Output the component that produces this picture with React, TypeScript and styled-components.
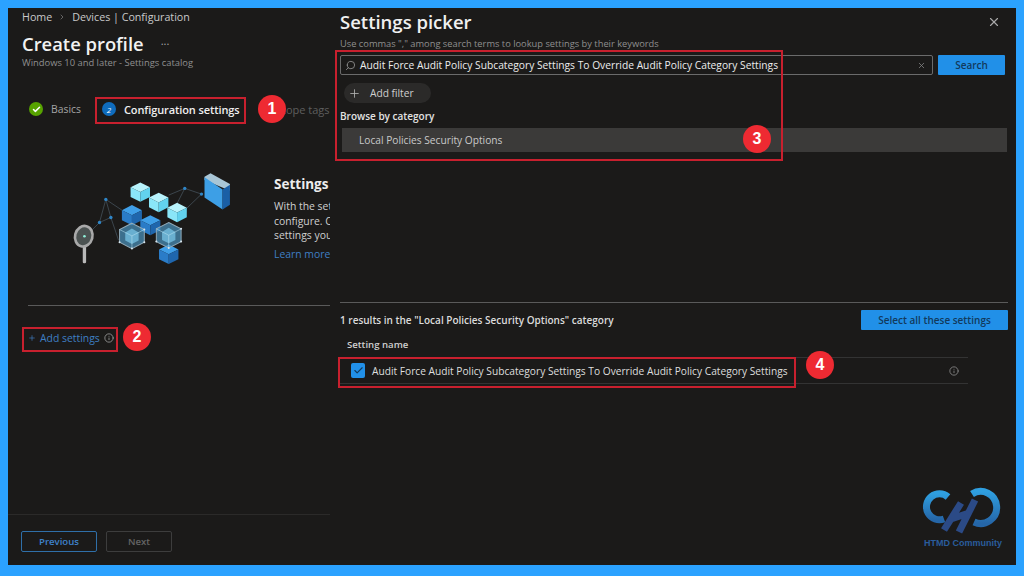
import React from 'react'
import styled, { createGlobalStyle } from 'styled-components'
import { X, Search as SearchIcon, Plus, Check, ChevronRight, Info } from 'lucide-react'

const GlobalStyle = createGlobalStyle`
  html, body {
    margin: 0;
    padding: 0;
    background: #2ba2ff;
  }
  body {
    font-family: "Open Sans", "Noto Sans", sans-serif;
  }
`

const Frame = styled.div`
  position: relative;
  width: 1024px;
  height: 576px;
  box-sizing: border-box;
  padding: 8px 8px 11px 8px;
  background: #2ba2ff;
  overflow: hidden;
`

const Layout = styled.div`
  display: grid;
  grid-template-columns: 322px 1fr;
  height: 100%;
  background: #1b1a19;
  color: #e6e6e6;
`

/* left blade */
const Blade = styled.section`
  display: flex;
  flex-direction: column;
  min-width: 0;
  overflow: hidden;
`

const Crumbs = styled.nav`
  display: flex;
  align-items: center;
  gap: 6px;
  padding: 1px 0 0 14px;
  height: 15px;
  font-size: 10.7px;
  color: #c9c9c9;
`

const Title = styled.h1`
  margin: 4px 0 0 14px;
  font-size: 18.4px;
  line-height: 26px;
  font-weight: 600;
  color: #f2f2f2;
  display: flex;
  align-items: center;
  gap: 17px;
`

const Ellipsis = styled.span`
  font-size: 11px;
  font-weight: 400;
  color: #a8a8a8;
  margin-bottom: 6px;
`

const Caption = styled.p`
  margin: -3px 0 0 14px;
  font-size: 9.4px;
  line-height: 12px;
  color: #8f8f8f;
`

const Steps = styled.div`
  display: flex;
  align-items: center;
  height: 20px;
  margin-top: 30px;
  padding-left: 21px;
  white-space: nowrap;
`

const StepDot = styled.span<{ $color: string; $gap?: number }>`
  width: 14px;
  height: 14px;
  flex: none;
  margin-left: ${(p) => p.$gap ?? 0}px;
  border-radius: 50%;
  background: ${(p) => p.$color};
  color: #fff;
  display: flex;
  align-items: center;
  justify-content: center;
  font-size: 8px;
  font-style: italic;
`

const StepLabel = styled.span<{ $active?: boolean; $dim?: boolean }>`
  margin-left: ${(p) => (p.$dim ? '35px' : '8px')};
  font-size: ${(p) => (p.$active || p.$dim ? '11px' : '10.4px')};
  font-weight: ${(p) => (p.$active ? 600 : 400)};
  letter-spacing: ${(p) => (p.$active ? '-0.1px' : '0')};
  color: ${(p) => (p.$active ? '#efefef' : p.$dim ? '#5e5e5e' : '#a4a4a4')};
`

const Intro = styled.div`
  display: flex;
  height: 135px;
  margin-top: 51px;
  white-space: nowrap;
`

const IntroArt = styled.svg`
  width: 164px;
  height: 97px;
  margin: 0 40px 0 62px;
  flex: none;
`

const IntroText = styled.div`
  padding-top: 5px;
  min-width: 0;
`

const IntroHeading = styled.h2`
  margin: 0 0 6px 0;
  font-size: 13.5px;
  line-height: 18px;
  font-weight: 700;
  color: #ededed;
`

const IntroLine = styled.p`
  margin: 0;
  font-size: 10.4px;
  line-height: 14.5px;
  color: #cfcfcf;
`

const LearnLink = styled.a`
  display: block;
  margin-top: 4px;
  font-size: 10.4px;
  line-height: 14px;
  color: #3f7fc4;
`

const Rule = styled.hr`
  height: 1px;
  margin: 0 0 0 20px;
  border: 0;
  background: #5a5a5a;
`

const AddRow = styled.div`
  display: flex;
  align-items: center;
  gap: 4px;
  height: 20px;
  margin: 22px 0 0 20px;
  font-size: 10.4px;
  color: #3f7fc4;
`

const Spacer = styled.div`
  flex: 1;
`

const FooterRule = styled.hr`
  height: 1px;
  margin: 0;
  border: 0;
  background: #2b2a29;
`

const Footer = styled.div`
  display: flex;
  gap: 9px;
  padding: 16px 0 13px 13px;
`

const FooterButton = styled.button<{ $primary?: boolean }>`
  height: 21px;
  width: ${(p) => (p.$primary ? 76 : 66)}px;
  padding: 0;
  border-radius: 2px;
  background: transparent;
  border: 1px solid ${(p) => (p.$primary ? '#2f6fa8' : '#3d3d3d')};
  color: ${(p) => (p.$primary ? '#3f82cc' : '#646464')};
  font-family: inherit;
  font-size: 9.6px;
  font-weight: 600;
`

/* right picker */
const Picker = styled.section`
  display: flex;
  flex-direction: column;
  padding: 0 8px 0 10px;
  min-width: 0;
`

const PickerHead = styled.div`
  display: flex;
  align-items: center;
  justify-content: space-between;
  height: 28px;
  padding-right: 7px;
`

const PickerTitle = styled.h2`
  margin: 0;
  font-size: 18.5px;
  font-weight: 600;
  line-height: 28px;
  color: #f0f0f0;
`

const PickerHint = styled.p`
  margin: 1px 0 0 0;
  font-size: 9.3px;
  line-height: 13px;
  color: #8f8f8f;
`

const SearchRow = styled.div`
  display: flex;
  gap: 5px;
  margin-top: 5px;
  padding-right: 3px;
`

const SearchBox = styled.div`
  flex: 1;
  display: flex;
  align-items: center;
  gap: 4px;
  height: 20px;
  box-sizing: border-box;
  padding: 0 6px 0 4px;
  border: 1px solid #6b6b6b;
  border-radius: 2px;
  font-size: 10.25px;
  color: #ededed;
  white-space: nowrap;
`

const SearchValue = styled.span`
  flex: 1;
`

const FlippedSearch = styled(SearchIcon)`
  flex: none;
  transform: scaleX(-1);
`

const PrimaryButton = styled.button<{ $wide?: boolean }>`
  width: ${(p) => (p.$wide ? 147 : 67)}px;
  height: 20px;
  padding: 0;
  border: 0;
  border-radius: 1px;
  background: #2190e8;
  color: #123a5c;
  font-family: inherit;
  font-size: 10px;
  font-weight: 600;
`

const FilterPill = styled.div`
  display: flex;
  align-items: center;
  gap: 9px;
  width: 87px;
  height: 20px;
  box-sizing: border-box;
  margin: 8px 0 0 4px;
  padding-left: 4px;
  border-radius: 10px;
  background: #2b2a29;
  font-size: 10.2px;
  color: #cfcfcf;
`

const BrowseLabel = styled.h3`
  margin: 6px 0 0 0;
  font-size: 10px;
  line-height: 14px;
  font-weight: 600;
  color: #e2e2e2;
`

const CategoryRow = styled.div`
  display: flex;
  align-items: center;
  height: 24px;
  margin: 5px 1px 0 2px;
  padding-left: 17px;
  background: #3b3a39;
  font-size: 10.2px;
  color: #c9c9c9;
`

const ResultsRule = styled.hr`
  height: 1px;
  margin: 150px 0 0 0;
  border: 0;
  background: #5a5a5a;
`

const ResultsHead = styled.div`
  display: flex;
  align-items: center;
  justify-content: space-between;
  margin-top: 7px;
`

const ResultsLabel = styled.span`
  font-size: 10px;
  font-weight: 600;
  color: #dcdcdc;
`

const ColumnHead = styled.div`
  margin: 8px 0 0 7px;
  font-size: 9.6px;
  line-height: 14px;
  font-weight: 600;
  color: #d0d0d0;
`

const SettingRow = styled.div`
  display: flex;
  align-items: center;
  gap: 7px;
  height: 27px;
  width: 628px;
  box-sizing: border-box;
  margin-top: 5px;
  padding: 0 9px 0 11px;
  border-top: 1px solid #333;
  border-bottom: 1px solid #333;
  font-size: 10.2px;
  color: #dedede;
  white-space: nowrap;
`

const CheckBox = styled.span`
  width: 14px;
  height: 15px;
  flex: none;
  border-radius: 2px;
  background: #2190e8;
  color: #123a5c;
  display: flex;
  align-items: center;
  justify-content: center;
`

const SettingName = styled.span`
  flex: 1;
`

/* annotations painted over the capture */
const Highlight = styled.div<{ $x: number; $y: number; $w: number; $h: number }>`
  position: absolute;
  left: ${(p) => p.$x}px;
  top: ${(p) => p.$y}px;
  width: ${(p) => p.$w}px;
  height: ${(p) => p.$h}px;
  box-sizing: border-box;
  border: 2.5px solid #c8202e;
  pointer-events: none;
`

const Badge = styled.div<{ $x: number; $y: number }>`
  position: absolute;
  left: ${(p) => p.$x - 14}px;
  top: ${(p) => p.$y - 14}px;
  width: 28px;
  height: 28px;
  border-radius: 50%;
  background: #ee2a32;
  color: #fff;
  font-family: "Liberation Sans", sans-serif;
  font-size: 16px;
  font-weight: 700;
  display: flex;
  align-items: center;
  justify-content: center;
`

const Watermark = styled.div`
  position: absolute;
  left: 918px;
  top: 486px;
  width: 90px;
  display: flex;
  flex-direction: column;
  align-items: center;
`

const WatermarkArt = styled.svg`
  width: 82px;
  height: 50px;
`

const WatermarkText = styled.span`
  margin-top: 2px;
  font-family: "Liberation Sans", sans-serif;
  font-size: 9px;
  font-weight: 700;
  color: #2a5d9c;
  white-space: nowrap;
`

const Cube: React.FC<{ x: number; y: number; s: number; top: string; left: string; right: string }> = ({
  x,
  y,
  s,
  top,
  left,
  right,
}) => {
  const h = s * 0.5
  return (
    <g>
      <polygon points={`${x},${y - s} ${x + s},${y - s + h} ${x},${y} ${x - s},${y - s + h}`} fill={top} />
      <polygon points={`${x - s},${y - s + h} ${x},${y} ${x},${y + s} ${x - s},${y + h}`} fill={left} />
      <polygon points={`${x + s},${y - s + h} ${x},${y} ${x},${y + s} ${x + s},${y + h}`} fill={right} />
    </g>
  )
}

const GlassCube: React.FC<{ x: number; y: number }> = ({ x, y }) => (
  <g>
    <polygon
      points={`${x},${y - 38} ${x + 37},${y - 19} ${x + 37},${y + 19} ${x},${y + 38} ${x - 37},${y + 19} ${x - 37},${y - 19}`}
      fill="#4f9ccc"
      fillOpacity="0.65"
      stroke="#8fa9b8"
      strokeWidth="3"
    />
    <polygon
      points={`${x},${y - 22} ${x + 20},${y - 10} ${x + 20},${y + 14} ${x},${y + 24} ${x - 20},${y + 14} ${x - 20},${y - 10}`}
      fill="#7ccbec"
      fillOpacity="0.7"
    />
    <path d={`M${x} ${y}L${x} ${y + 38}M${x} ${y}L${x - 37} ${y - 19}M${x} ${y}L${x + 37} ${y - 19}`} stroke="#bfe6f5" strokeWidth="1.5" />
    <circle cx={x + 37} cy={y - 19} r="3" fill="#d8e6ee" />
    <circle cx={x - 37} cy={y + 19} r="3" fill="#d8e6ee" />
    <circle cx={x + 37} cy={y + 19} r="3" fill="#d8e6ee" />
    <circle cx={x} cy={y + 38} r="3" fill="#d8e6ee" />
  </g>
)

const Illustration = () => (
  <IntroArt viewBox="90 30 490 290">
    <path
      d="M150 215L178 187L197 118L245 150M178 187L212 172L235 240M197 118L212 172M385 105L433 85L483 102L433 150M433 85L410 130"
      fill="none"
      stroke="#4b5a66"
      strokeWidth="2"
    />
    <circle cx="197" cy="118" r="5" fill="#2f86c8" />
    <circle cx="178" cy="187" r="5" fill="#2f86c8" />
    <circle cx="212" cy="172" r="5" fill="#2f86c8" />
    <circle cx="433" cy="85" r="5" fill="#2f86c8" />
    <circle cx="483" cy="102" r="5" fill="#2f86c8" />
    <Cube x={275} y={165} s={30} top="#3f9fe8" left="#2a7cc8" right="#1f66ad" />
    <Cube x={330} y={195} s={30} top="#3f9fe8" left="#2a7cc8" right="#1f66ad" />
    <Cube x={385} y={282} s={29} top="#3f9fe8" left="#2a7cc8" right="#1f66ad" />
    <GlassCube x={275} y={227} />
    <GlassCube x={385} y={225} />
    <Cube x={300} y={96} s={29} top="#b8f3fc" left="#8ae6f8" right="#62d2ee" />
    <Cube x={355} y={127} s={29} top="#b8f3fc" left="#8ae6f8" right="#62d2ee" />
    <Cube x={410} y={157} s={29} top="#b8f3fc" left="#8ae6f8" right="#62d2ee" />
    <polygon points="492,50 510,40 568,72 568,92 492,60" fill="#a9c6d6" />
    <polygon points="492,52 546,88 546,148 492,112" fill="#3d9fe6" />
    <polygon points="546,88 568,74 568,134 546,148" fill="#1a5fa6" />
    <rect x="128" y="255" width="10" height="54" rx="4" fill="#b9b9b9" />
    <ellipse cx="131" cy="228" rx="26" ry="31" transform="rotate(15 131 228)" fill="#4c5352" stroke="#a9a9a9" strokeWidth="8" />
    <circle cx="133" cy="228" r="4" fill="#8ff0d8" />
  </IntroArt>
)

const Logo = () => (
  <WatermarkArt viewBox="0 0 82 50">
    <defs>
      <linearGradient id="arc" x1="0" y1="0" x2="0" y2="1">
        <stop offset="0" stopColor="#2f9fe0" />
        <stop offset="1" stopColor="#2566a8" />
      </linearGradient>
    </defs>
    <path d="M26 11 A 13 13 0 1 0 22 33" fill="none" stroke="url(#arc)" strokeWidth="7" />
    <path d="M50 8 A 16 16 0 1 1 52 36" fill="none" stroke="url(#arc)" strokeWidth="7" />
    <path d="M22 44L39 17M37 46L53 14M29 33L47 27" fill="none" stroke="#2b4a86" strokeWidth="7" />
  </WatermarkArt>
)

const App: React.FC = () => (
  <Frame>
    <GlobalStyle />
    <Layout>
      <Blade>
        <Crumbs>
          <span>Home</span>
          <ChevronRight size={8} color="#8a8a8a" />
          <span>Devices | Configuration</span>
        </Crumbs>
        <Title>
          Create profile <Ellipsis>...</Ellipsis>
        </Title>
        <Caption>Windows 10 and later - Settings catalog</Caption>
        <Steps>
          <StepDot $color="#57a300">
            <Check size={9} strokeWidth={4} />
          </StepDot>
          <StepLabel>Basics</StepLabel>
          <StepDot $color="#0f6cbd" $gap={21}>
            2
          </StepDot>
          <StepLabel $active>Configuration settings</StepLabel>
          <StepLabel $dim>Scope tags</StepLabel>
        </Steps>
        <Intro>
          <Illustration />
          <IntroText>
            <IntroHeading>Settings catalog</IntroHeading>
            <IntroLine>With the settings catalog, you can choose what to</IntroLine>
            <IntroLine>configure. Choose from thousands of available</IntroLine>
            <IntroLine>settings you want to manage on your devices.</IntroLine>
            <LearnLink>Learn more about settings</LearnLink>
          </IntroText>
        </Intro>
        <Rule />
        <AddRow>
          <Plus size={8} />
          <span>Add settings</span>
          <Info size={10} color="#9a9a9a" />
        </AddRow>
        <Spacer />
        <FooterRule />
        <Footer>
          <FooterButton $primary>Previous</FooterButton>
          <FooterButton>Next</FooterButton>
        </Footer>
      </Blade>
      <Picker>
        <PickerHead>
          <PickerTitle>Settings picker</PickerTitle>
          <X size={14} color="#a8a8a8" />
        </PickerHead>
        <PickerHint>Use commas "," among search terms to lookup settings by their keywords</PickerHint>
        <SearchRow>
          <SearchBox>
            <FlippedSearch size={11} color="#8a8a8a" />
            <SearchValue>Audit Force Audit Policy Subcategory Settings To Override Audit Policy Category Settings</SearchValue>
            <X size={9} color="#8a8a8a" />
          </SearchBox>
          <PrimaryButton>Search</PrimaryButton>
        </SearchRow>
        <FilterPill>
          <Plus size={13} color="#b5b5b5" strokeWidth={1.5} />
          Add filter
        </FilterPill>
        <BrowseLabel>Browse by category</BrowseLabel>
        <CategoryRow>Local Policies Security Options</CategoryRow>
        <ResultsRule />
        <ResultsHead>
          <ResultsLabel>1 results in the "Local Policies Security Options" category</ResultsLabel>
          <PrimaryButton $wide>Select all these settings</PrimaryButton>
        </ResultsHead>
        <ColumnHead>Setting name</ColumnHead>
        <SettingRow>
          <CheckBox>
            <Check size={11} strokeWidth={2.5} />
          </CheckBox>
          <SettingName>Audit Force Audit Policy Subcategory Settings To Override Audit Policy Category Settings</SettingName>
          <Info size={10} color="#8a8a8a" />
        </SettingRow>
      </Picker>
    </Layout>
    <Highlight $x={95} $y={97} $w={151} $h={27} />
    <Highlight $x={22} $y={327} $w={96} $h={25} />
    <Highlight $x={335} $y={50} $w={448} $h={111} />
    <Highlight $x={338} $y={357} $w={458} $h={31} />
    <Badge $x={272} $y={109}>1</Badge>
    <Badge $x={137} $y={337}>2</Badge>
    <Badge $x={757} $y={139}>3</Badge>
    <Badge $x={820} $y={365}>4</Badge>
    <Watermark>
      <Logo />
      <WatermarkText>HTMD Community</WatermarkText>
    </Watermark>
  </Frame>
)

export default App
